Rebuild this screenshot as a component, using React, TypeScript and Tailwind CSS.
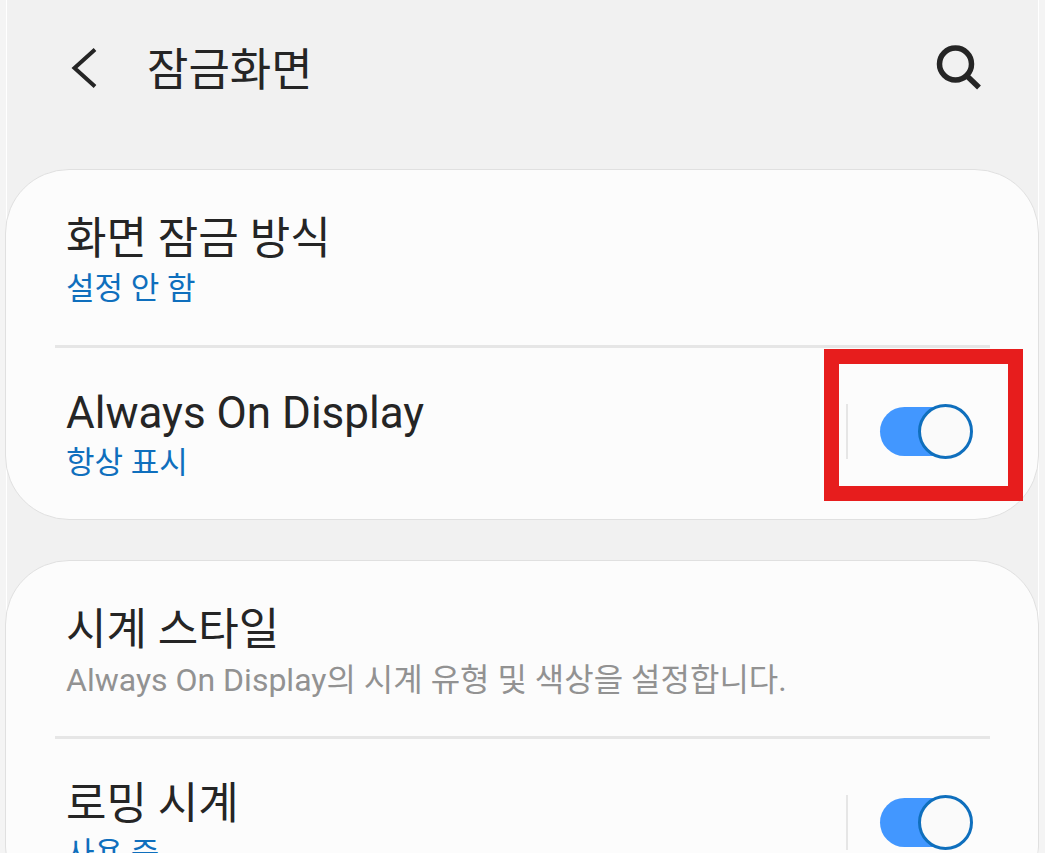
import React, { useId, useState } from 'react';

interface SettingRowProps {
  title: string;
  description: string;
  muted?: boolean;
  toggle?: boolean;
  highlighted?: boolean;
}

function Toggle({ labelledBy }: { labelledBy: string }) {
  const [checked, setChecked] = useState(true);

  return (
    <span className="relative flex h-[55px] w-[93px] items-center">
      <input
        type="checkbox"
        role="switch"
        aria-labelledby={labelledBy}
        checked={checked}
        onChange={(e) => setChecked(e.target.checked)}
        className="peer h-[49px] w-[88px] cursor-pointer appearance-none rounded-full bg-gray-300 checked:bg-[#4297ff]"
      />
      {/* Knob */}
      <span
        className="pointer-events-none absolute left-0 top-0 h-[55px] w-[55px] rounded-full
                   border-[3px] border-gray-400 bg-[#fafafa]
                   peer-checked:left-auto peer-checked:right-0 peer-checked:border-[#0f6fbd]"
      />
    </span>
  );
}

function SettingRow({ title, description, muted, toggle, highlighted }: SettingRowProps) {
  const id = useId();

  return (
    <li className="flex items-start justify-between pb-[35px] pl-[60px] pr-[65px] pt-[37px]">
      <div>
        <h2 id={id} className="text-[44px] leading-[57px] text-[#252525]">
          {title}
        </h2>
        <p className={`leading-[42px] ${muted ? 'text-[32px] text-[#929292]' : 'text-[31px] text-[#0f6fbd]'}`}>
          {description}
        </p>
      </div>

      {toggle && (
        <div className="relative mt-[19px] flex shrink-0 items-center gap-8">
          <span className="h-[55px] w-0.5 bg-[#e6e6e6]" />
          <Toggle labelledBy={id} />
          {highlighted && (
            <span
              className="pointer-events-none absolute -bottom-[42px] -left-[22px] -right-[50px] -top-[55px]
                         border-[15px] border-[#e71d1d]"
            />
          )}
        </div>
      )}
    </li>
  );
}

function Divider() {
  return <li role="separator" className="ml-[49px] mr-12 h-[3px] bg-[#e6e6e6]" />;
}

function Card({ children }: { children: React.ReactNode }) {
  return (
    <ul className="-ml-0.5 -mr-px rounded-[64px] border border-[#e0e0e0] bg-[#fcfcfc] pt-1">
      {children}
    </ul>
  );
}

export default function App() {
  return (
    <div className="h-screen overflow-hidden bg-[#f4f4f4] px-1.5 font-['Roboto','Noto_Sans_CJK_KR',sans-serif]">
      <div className="min-h-full border-x border-white bg-[#f1f1f1]">
        {/* Header */}
        <header className="flex h-[169px] items-start justify-between pl-[63px] pr-[56px] pt-10">
          <div className="flex items-start gap-[45px]">
            <button type="button" aria-label="뒤로" className="cursor-pointer">
              <svg width="32" height="56" viewBox="0 0 32 56" fill="none" stroke="#252525" strokeWidth="4">
                <path d="M25 9.5 4.5 28 25 46.5" />
              </svg>
            </button>
            <h1 className="text-[45px] leading-[62px] text-[#252525]">잠금화면</h1>
          </div>
          <button type="button" aria-label="검색" className="mt-1 cursor-pointer">
            <svg width="46" height="48" viewBox="0 0 46 48" fill="none" stroke="#252525" strokeWidth="5.5">
              <circle cx="19.5" cy="20" r="16" />
              <path d="M30.5 31.5 43 43.5" />
            </svg>
          </button>
        </header>

        <main className="flex flex-col gap-10">
          <Card>
            <SettingRow title="화면 잠금 방식" description="설정 안 함" />
            <Divider />
            <SettingRow title="Always On Display" description="항상 표시" toggle highlighted />
          </Card>

          <Card>
            <SettingRow
              title="시계 스타일"
              description="Always On Display의 시계 유형 및 색상을 설정합니다."
              muted
            />
            <Divider />
            <SettingRow title="로밍 시계" description="사용 중" toggle />
          </Card>
        </main>
      </div>
    </div>
  );
}
